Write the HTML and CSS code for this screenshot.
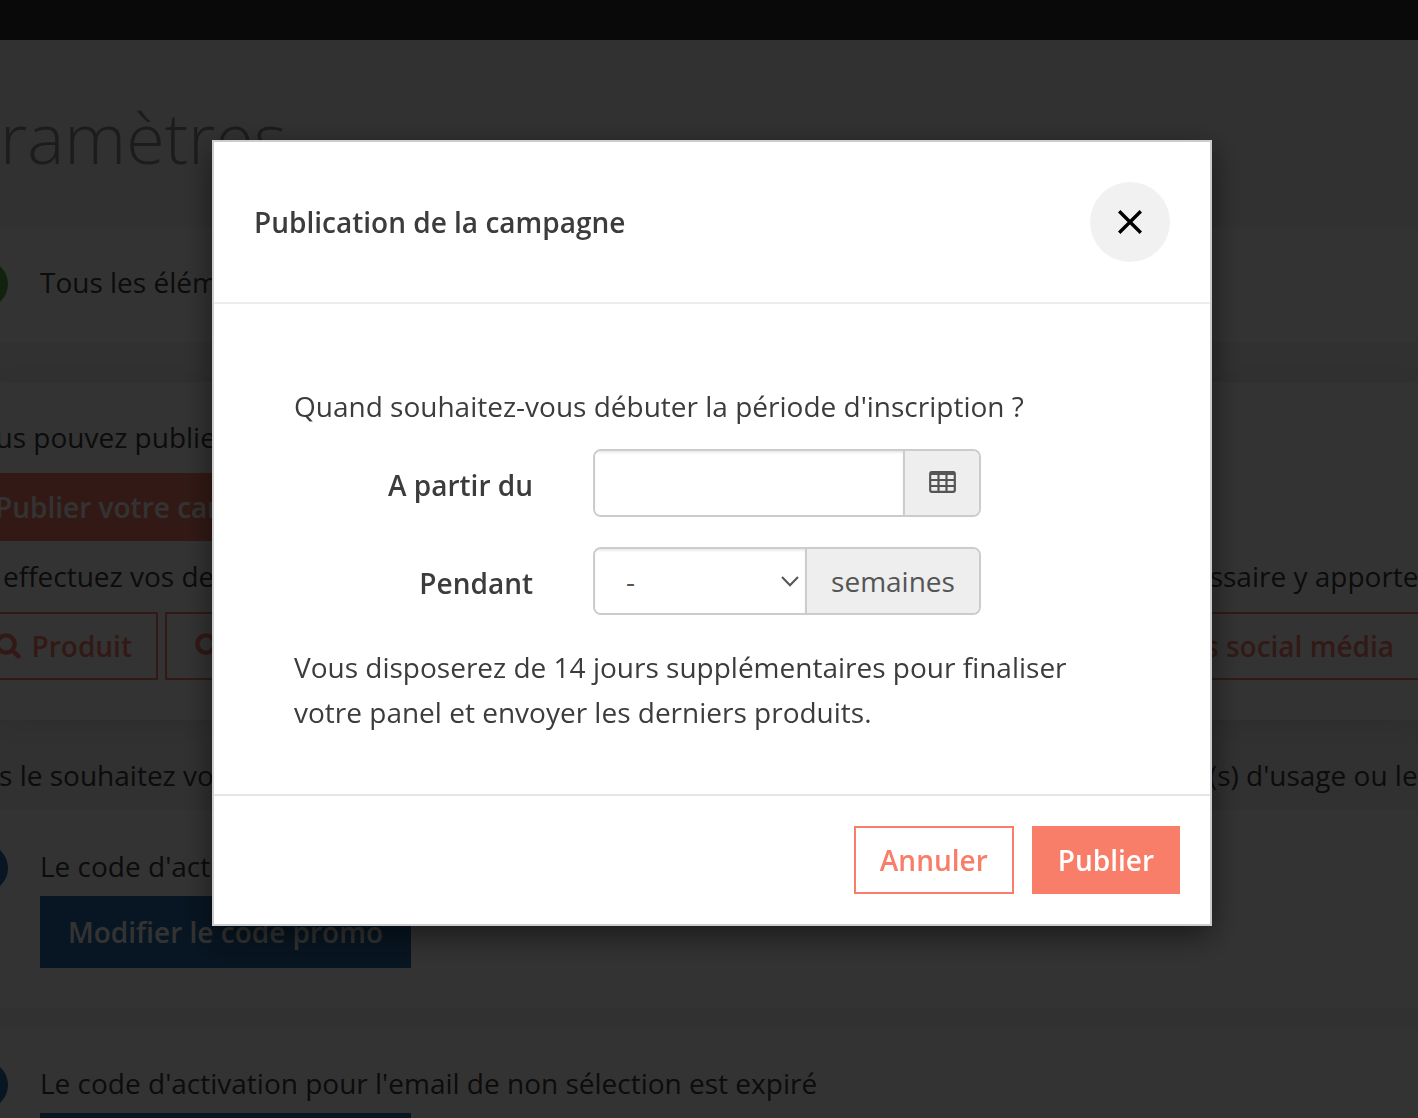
FILE: index.html
```html
<!DOCTYPE html>
<html lang="fr">
<head>
    <meta charset="UTF-8">
    <meta name="viewport" content="width=device-width, initial-scale=1.0">
    <title>Paramètres</title>
    <link rel="stylesheet" href="styles.css">
</head>
<body>

<div class="topbar"></div>

<div class="page">
    <h1>Paramètres</h1>

    <!-- Statut de la campagne -->
    <div class="panel panel-status">
        <div class="item">
            <span class="dot dot-success"></span>
            <span>Tous les éléments</span>
        </div>
    </div>

    <!-- Publication -->
    <div class="panel panel-publish">
        <p class="publish-intro">Vous pouvez publier</p>
        <button type="button" class="btn btn-primary btn-publish">Publier votre campagne</button>
        <div class="line line-check">
            <span>et effectuez vos demandes</span>
            <span>nécessaire y apporter</span>
        </div>
        <div class="checks">
            <button type="button" class="btn btn-outline btn-product">
                <svg class="icon-search" viewBox="0 0 26 26"><circle cx="11" cy="11" r="8.6"/><path d="M17.2 17.2L23.4 23.4"/></svg>
                <span>Produit</span>
            </button>
            <button type="button" class="btn btn-outline btn-social">
                <svg class="icon-search" viewBox="0 0 26 26"><circle cx="11" cy="11" r="8.6"/><path d="M17.2 17.2L23.4 23.4"/></svg>
                <span>Missions social média</span>
            </button>
        </div>
    </div>

    <div class="line line-options">
        <span>is le souhaitez vous</span>
        <span>(s) d'usage ou les</span>
    </div>

    <!-- Codes d'activation -->
    <div class="panel panel-code">
        <div class="item">
            <span class="dot dot-info"></span>
            <span>Le code d'activation</span>
        </div>
        <button type="button" class="btn btn-info">Modifier le code promo</button>
    </div>
    <div class="panel panel-code">
        <div class="item">
            <span class="dot dot-info"></span>
            <span>Le code d'activation pour l'email de non sélection est expiré</span>
        </div>
        <button type="button" class="btn btn-info" aria-label="Modifier le code promo"></button>
    </div>
</div>

<div class="backdrop">
    <div class="modal">
        <div class="modal-header">
            <h2>Publication de la campagne</h2>
            <button type="button" class="close" aria-label="Fermer">
                <svg viewBox="0 0 24 24"><path d="M1.2 1.2L22.8 22.8M22.8 1.2L1.2 22.8"/></svg>
            </button>
        </div>

        <form class="modal-body">
            <p>Quand souhaitez-vous débuter la période d'inscription ?</p>
            <div class="form-row">
                <label for="startDate">A partir du</label>
                <div class="input-group">
                    <input type="text" id="startDate">
                    <span class="addon addon-icon">
                        <svg viewBox="0 0 27 22">
                            <rect x="1.2" y="1.2" width="24.6" height="19.6" rx="1.8"/>
                            <path d="M1.5 2.3H25.5" class="thick"/>
                            <path d="M1 9H26M1 15H26M9.5 3V21M17.5 3V21"/>
                        </svg>
                    </span>
                </div>
            </div>
            <div class="form-row">
                <label for="duration">Pendant</label>
                <div class="input-group">
                    <div class="select" id="duration">
                        <span>-</span>
                        <svg viewBox="0 0 18 11"><path d="M1 1L9 9.3L17 1"/></svg>
                    </div>
                    <span class="addon addon-text">semaines</span>
                </div>
            </div>
            <p>Vous disposerez de 14 jours supplémentaires pour finaliser votre panel et envoyer les derniers produits.</p>
        </form>

        <div class="modal-footer">
            <button type="button" class="btn btn-outline">Annuler</button>
            <button type="button" class="btn btn-primary">Publier</button>
        </div>
    </div>
</div>

</body>
</html>
```
FILE: styles.css
```css
* {
    box-sizing: border-box;
}
html {
    overflow: hidden;
}
body {
    margin: 0;
    height: 1118px;
    overflow: hidden;
    background-color: #f2f2f2;
    color: #3c3c3c;
    font-family: "Open Sans", sans-serif;
    font-size: 28px;
    line-height: 45px;
}
h1, h2, p {
    margin: 0;
}
svg {
    display: block;
    fill: none;
    stroke: currentColor;
    flex-shrink: 0;
}
.topbar {
    height: 40px;
    background-color: #2d2d2d;
}
.page {
    height: 1078px;
    overflow: hidden;
}
h1 {
    height: 187px;
    padding-top: 50px;
    margin-left: -78px;
    font-size: 70px;
    line-height: 95px;
    font-weight: 300;
    color: #8c8c8c;
}

/* Boutons */
.btn {
    display: flex;
    align-items: center;
    justify-content: center;
    height: 68px;
    padding: 0 24px;
    border: 2px solid #f87e69;
    font-family: inherit;
    font-size: 28px;
    font-weight: 600;
    white-space: nowrap;
    cursor: pointer;
}
.btn-primary {
    background-color: #f87e69;
    color: #fff;
}
.btn-outline {
    background-color: #fff;
    color: #f87e69;
}
.btn-info {
    width: 371px;
    height: 72px;
    margin-left: 40px;
    border: none;
    background-color: #286ba8;
    color: #fff;
}

/* Page */
.panel {
    background-color: #fff;
}
.item {
    display: flex;
    gap: 32px;
    margin-left: -40px;
    white-space: nowrap;
}
.dot {
    flex-shrink: 0;
    width: 48px;
    height: 48px;
    border-radius: 50%;
}
.dot-success {
    background-color: #5bb040;
}
.dot-info {
    background-color: #286ba8;
}
.panel-status {
    height: 115px;
    margin-bottom: 40px;
    padding-top: 33px;
}
.panel-publish {
    height: 338px;
    padding-top: 33px;
    box-shadow: 0 4px 24px rgba(0, 0, 0, 0.08);
}
.publish-intro {
    margin-left: -38px;
}
.btn-publish {
    margin: 13px 0 0 -31px;
}
.line {
    display: flex;
    justify-content: space-between;
    white-space: nowrap;
}
.line-check {
    margin: 13px -12px 0 -30px;
}
.checks {
    display: flex;
    justify-content: space-between;
    gap: 7px;
    margin: 13px -6px 0 -40px;
}
.btn-product {
    width: 198px;
    justify-content: flex-end;
    gap: 11px;
}
.btn-social {
    flex: 1;
    justify-content: space-between;
    padding: 0 28px;
}
.icon-search {
    width: 26px;
    height: 26px;
    stroke-width: 4.4;
    stroke-linecap: round;
}
.line-options {
    height: 90px;
    margin: 0 -13px 0 -8px;
    padding-top: 33px;
}
.panel-code {
    height: 198px;
    margin-bottom: 19px;
    padding-top: 34px;
}
.panel-code .item {
    height: 52px;
}

/* Fenêtre modale */
.backdrop {
    position: fixed;
    inset: 0;
    padding: 140px 206px 0 212px;
    background-color: rgba(0, 0, 0, 0.8);
}
.modal {
    height: 786px;
    border: 2px solid #ccc;
    background-color: #fff;
    box-shadow: 0 10px 30px rgba(0, 0, 0, 0.5);
}
.modal-header {
    display: flex;
    justify-content: space-between;
    align-items: center;
    height: 162px;
    padding: 0 40px;
    border-bottom: 2px solid #ededed;
}
.modal-header h2 {
    font-size: 28px;
    font-weight: 600;
}
.close {
    display: flex;
    align-items: center;
    justify-content: center;
    width: 80px;
    height: 80px;
    border: none;
    border-radius: 50%;
    background-color: #f1f1f1;
    color: #000;
    cursor: pointer;
}
.close svg {
    width: 24px;
    height: 24px;
    stroke-width: 3.4;
}
.modal-body {
    height: 490px;
    padding: 80px 80px 0;
}
.form-row {
    display: flex;
    height: 68px;
    margin: 20px 0 30px;
}
.form-row + .form-row {
    margin-top: 0;
}
label {
    width: 239px;
    margin-right: 60px;
    padding-top: 14px;
    font-weight: 600;
    text-align: right;
}
.input-group {
    display: flex;
    width: 388px;
    border: 2px solid #ccc;
    border-radius: 8px;
    overflow: hidden;
    color: #555;
}
.input-group input, .select {
    flex: 1;
    min-width: 0;
    border: none;
    background-color: #fff;
    box-shadow: inset 0 2px 2px rgba(0, 0, 0, 0.075);
}
.select {
    display: flex;
    align-items: center;
    justify-content: space-between;
    padding: 0 6px 0 31px;
}
.select svg {
    width: 18px;
    height: 11px;
    stroke-width: 2;
}
.addon {
    display: flex;
    align-items: center;
    justify-content: center;
    border-left: 2px solid #ccc;
    background-color: #eee;
}
.addon-icon {
    width: 76px;
    padding-bottom: 2px;
}
.addon-icon svg {
    width: 27px;
    height: 22px;
    stroke-width: 2.2;
}
.addon-icon .thick {
    stroke-width: 3.6;
}
.addon-text {
    width: 174px;
}
.modal-footer {
    display: flex;
    justify-content: flex-end;
    gap: 18px;
    padding: 30px;
    border-top: 2px solid #e5e5e5;
}
```
